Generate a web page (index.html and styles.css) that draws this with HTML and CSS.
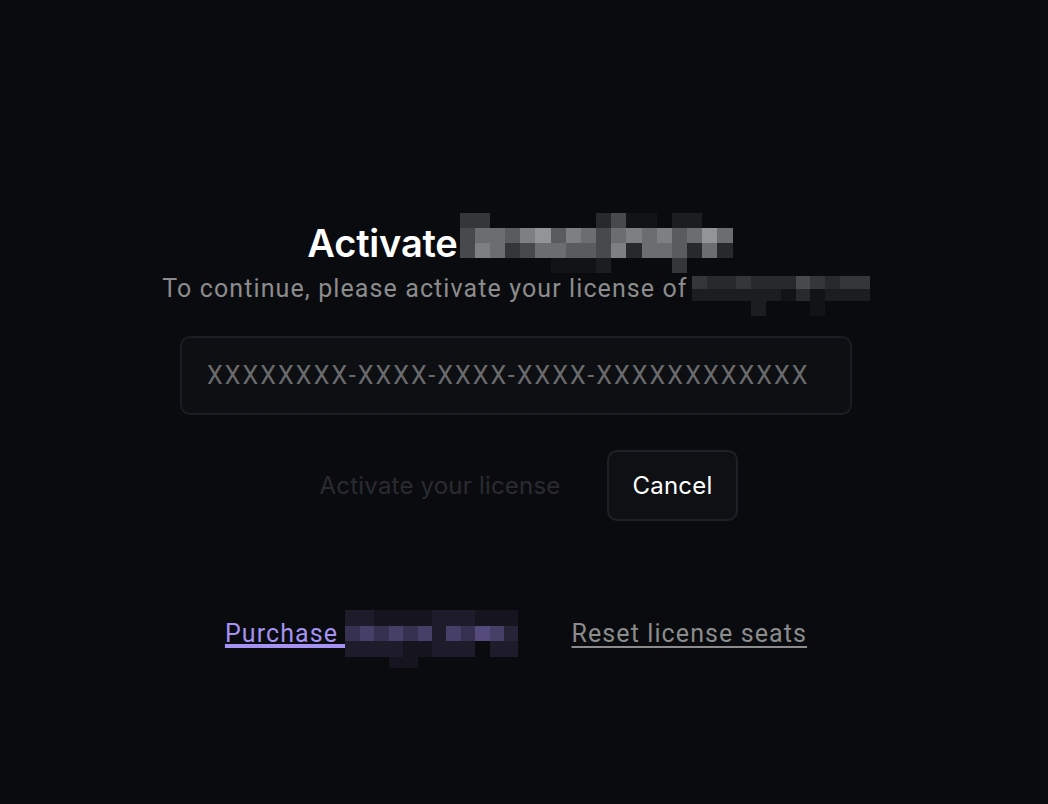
FILE: index.html
```html
<!DOCTYPE html>
<html lang="en">
  <head>
    <meta charset="utf-8" />
    <meta name="viewport" content="width=device-width, initial-scale=1" />
    <title>Activate</title>
    <link rel="stylesheet" href="styles.css">
  </head>
  <body>
    <main class="activate">
      <!--Title-->
      <h1 class="activate-title">
        Activate
        <span class="mosaic mosaic-title" aria-hidden="true">
          <i class="g4"></i><i class="g4"></i><i></i><i></i><i></i><i></i><i></i><i></i><i></i><i class="g3"></i><i class="g5"></i><i class="g1"></i><i class="g1"></i><i></i><i class="g2"></i><i class="g2"></i><i></i><i></i>
          <i class="g5"></i><i class="g7"></i><i class="g7"></i><i class="g6"></i><i class="g8"></i><i class="g9"></i><i class="g6"></i><i class="g8"></i><i class="g7"></i><i class="g5"></i><i class="g7"></i><i class="g8"></i><i class="g7"></i><i class="g8"></i><i class="g6"></i><i class="g7"></i><i class="g9"></i><i class="g7"></i>
          <i class="g5"></i><i class="g8"></i><i class="g7"></i><i class="g4"></i><i class="g5"></i><i class="g7"></i><i class="g7"></i><i class="g6"></i><i class="g6"></i><i class="g5"></i><i class="g8"></i><i class="g3"></i><i class="g7"></i><i class="g7"></i><i class="g6"></i><i class="g3"></i><i class="g7"></i><i class="g3"></i>
          <i></i><i></i><i></i><i></i><i></i><i></i><i class="g1"></i><i class="g1"></i><i class="g1"></i><i class="g2"></i><i></i><i></i><i></i><i></i><i class="g4"></i><i></i><i></i><i></i>
        </span>
      </h1>
      <p class="activate-subtitle">
        To continue, please activate your license of
        <span class="mosaic mosaic-sub" aria-hidden="true">
          <i class="g4"></i><i class="g3"></i><i class="g3"></i><i class="g4"></i><i class="g3"></i><i class="g3"></i><i class="g3"></i><i class="g5"></i><i class="g4"></i><i class="g3"></i><i class="g4"></i><i class="g4"></i>
          <i class="g2"></i><i class="g2"></i><i class="g2"></i><i class="g2"></i><i class="g2"></i><i class="g2"></i><i class="g1"></i><i class="g3"></i><i class="g1"></i><i class="g2"></i><i class="g2"></i><i class="g2"></i>
          <i></i><i></i><i></i><i></i><i class="g2"></i><i></i><i></i><i></i><i class="g1"></i><i></i><i></i><i></i>
        </span>
      </p>

      <!--Key-->
      <input class="license-input" type="text" placeholder="XXXXXXXX-XXXX-XXXX-XXXX-XXXXXXXXXXXX" />

      <!--Actions-->
      <div class="actions">
        <button class="btn btn-activate" type="button" disabled>Activate your license</button>
        <button class="btn btn-cancel" type="button">Cancel</button>
      </div>

      <!--Links-->
      <div class="links">
        <a class="link link-purchase" href="#"><span class="link-text">Purchase&nbsp;</span><span class="mosaic mosaic-link" aria-hidden="true">
            <i class="p2"></i><i class="p2"></i><i class="p1"></i><i class="p1"></i><i class="p1"></i><i class="p1"></i><i class="p2"></i><i class="p2"></i><i class="p2"></i><i class="p1"></i><i class="p1"></i><i class="p1"></i>
            <i class="p4"></i><i class="p5"></i><i class="p4"></i><i class="p5"></i><i class="p4"></i><i class="p5"></i><i class="p2"></i><i class="p5"></i><i class="p4"></i><i class="p6"></i><i class="p5"></i><i class="p3"></i>
            <i class="p2"></i><i class="p2"></i><i class="p2"></i><i class="p2"></i><i class="p1"></i><i class="p1"></i><i class="p2"></i><i class="p2"></i><i class="p2"></i><i></i><i class="p2"></i><i class="p2"></i>
            <i></i><i></i><i></i><i class="p1"></i><i class="p1"></i><i></i><i></i><i></i><i></i><i></i><i></i><i></i>
          </span></a>
        <a class="link link-reset" href="#">Reset license seats</a>
      </div>
    </main>
  </body>
</html>
```

FILE: styles.css
```css
html,
body {
  margin: 0;
  height: 100%;
  background-color: #0a0b0f;
}
body {
  font-family: "Roboto", "Liberation Sans", sans-serif;
  color: #ffffff;
}
.activate {
  display: flex;
  flex-direction: column;
  align-items: center;
  padding: 213px 16px 0 0;
}
.activate-title {
  display: flex;
  align-items: center;
  margin: 0 0 0 8px;
  font-family: "Inter", sans-serif;
  font-weight: 600;
  font-size: 38px;
  line-height: 59px;
  letter-spacing: -0.2px;
}
.activate-subtitle {
  display: flex;
  align-items: flex-start;
  margin: -4px 0 0 0;
  font-size: 25px;
  line-height: 40px;
  letter-spacing: 1.1px;
  color: #8c8c8c;
  white-space: nowrap;
}
.mosaic {
  display: grid;
}
.mosaic i {
  display: block;
}
.mosaic-title {
  grid-template-columns: repeat(18, 1fr);
  grid-template-rows: repeat(4, 15px);
  width: 273px;
  margin-left: 2px;
}
.mosaic-sub {
  grid-template-columns: repeat(12, 1fr);
  grid-template-rows: 13px 12px 15px;
  width: 178px;
  margin: 7px 0 0 4px;
}
.mosaic-link {
  grid-template-columns: repeat(12, 1fr);
  grid-template-rows: 16px 15px 16px 11px;
  width: 173px;
  margin: -4px 0 0 0;
}
.g1 { background: #121317; }
.g2 { background: #1c1d21; }
.g3 { background: #28292d; }
.g4 { background: #35363a; }
.g5 { background: #48494d; }
.g6 { background: #5a5b5f; }
.g7 { background: #6c6d70; }
.g8 { background: #7e7f82; }
.g9 { background: #939496; }
.p1 { background: #16151f; }
.p2 { background: #1e1c2b; }
.p3 { background: #272438; }
.p4 { background: #363150; }
.p5 { background: #463f68; }
.p6 { background: #544b7c; }
.license-input {
  box-sizing: border-box;
  width: 672px;
  height: 79px;
  margin-top: 20px;
  padding: 0 25px;
  background-color: #0e0f13;
  border: 2px solid #1d1e23;
  border-radius: 10px;
  font-family: "Roboto", sans-serif;
  font-size: 25px;
  color: #ffffff;
  outline: none;
}
.license-input::placeholder {
  color: #6a6b6d;
  letter-spacing: 2.1px;
}
.actions {
  display: flex;
  align-items: center;
  gap: 20px;
  margin-top: 35px;
}
.btn {
  box-sizing: border-box;
  height: 71px;
  padding: 0 24px;
  border: 2px solid transparent;
  border-radius: 10px;
  background: transparent;
  font-family: "Inter", sans-serif;
  font-size: 24px;
  letter-spacing: 0.2px;
  cursor: pointer;
}
.btn-activate {
  color: #2a2b30;
  cursor: default;
}
.btn-cancel {
  background-color: #0f1014;
  border-color: #1f2025;
  color: #ffffff;
}
.links {
  display: flex;
  align-items: flex-start;
  gap: 53px;
  margin-top: 93px;
}
.link {
  display: flex;
  align-items: flex-start;
  font-size: 25px;
  line-height: 40px;
  letter-spacing: 1.1px;
  white-space: nowrap;
}
.link-text,
.link-reset {
  text-decoration: underline;
  text-decoration-thickness: 2px;
  text-underline-offset: 4px;
}
.link-purchase {
  color: #a592f2;
}
.link-reset {
  color: #8c8c8c;
}
```
